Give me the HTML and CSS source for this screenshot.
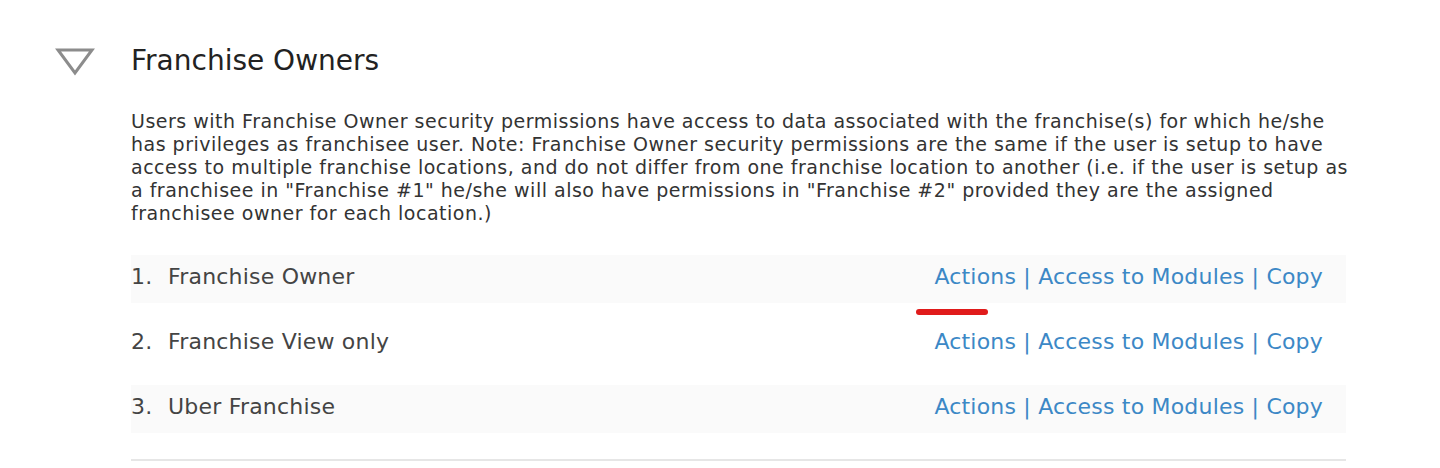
FILE: index.html
```html
<!DOCTYPE html>
<html>
<head>
    <title>Franchise Owners</title>
    <link rel="stylesheet" href="styles.css">
</head>
<body>
    <div class="section">
        <div class="toggle">
            <svg width="40" height="30" viewBox="0 0 40 30">
                <path d="M3 3 H37 L20 26 Z" fill="none" stroke="#8c8c8c" stroke-width="3" stroke-linejoin="miter"/>
            </svg>
        </div>
        <div class="content">
            <h2>Franchise Owners</h2>
            <p class="desc">Users with Franchise Owner security permissions have access to data associated with the franchise(s) for which he/she has privileges as franchisee user. Note: Franchise Owner security permissions are the same if the user is setup to have access to multiple franchise locations, and do not differ from one franchise location to another (i.e. if the user is setup as a franchisee in "Franchise #1" he/she will also have permissions in "Franchise #2" provided they are the assigned franchisee owner for each location.)</p>
            <ol class="roles">
                <li class="role shaded">
                    <span class="num">1.</span>
                    <span class="name">Franchise Owner</span>
                    <span class="links">
                        <a href="#">Actions</a> | <a href="#">Access to Modules</a> | <a href="#">Copy</a>
                        <span class="mark"></span>
                    </span>
                </li>
                <li class="role">
                    <span class="num">2.</span>
                    <span class="name">Franchise View only</span>
                    <span class="links">
                        <a href="#">Actions</a> | <a href="#">Access to Modules</a> | <a href="#">Copy</a>
                    </span>
                </li>
                <li class="role shaded">
                    <span class="num">3.</span>
                    <span class="name">Uber Franchise</span>
                    <span class="links">
                        <a href="#">Actions</a> | <a href="#">Access to Modules</a> | <a href="#">Copy</a>
                    </span>
                </li>
            </ol>
        </div>
    </div>
</body>
</html>
```

FILE: styles.css
```css
body {
    margin: 0;
    background: #fff;
    font-family: "DejaVu Sans", Verdana, sans-serif;
    color: #333;
}
.section {
    display: flex;
    padding: 0 94px 0 55px;
}
.toggle {
    width: 76px;
    padding-top: 47px;
}
.toggle svg {
    display: block;
}
.content {
    flex: 1;
    border-bottom: 2px solid #e6e6e6;
    padding-bottom: 26px;
}
h2 {
    margin: 0;
    padding-top: 43px;
    font-size: 28px;
    font-weight: 400;
    line-height: 36px;
    color: #222;
}
.desc {
    margin: 31px -10px 0 0;
    font-size: 19px;
    line-height: 23px;
    letter-spacing: 0.5px;
    color: #333;
}
.roles {
    list-style: none;
    margin: 30px 0 0;
    padding: 0;
    display: flex;
    flex-direction: column;
    gap: 17px;
}
.role {
    display: flex;
    align-items: center;
    height: 48px;
    padding: 0 23px 6px 0;
    box-sizing: border-box;
    font-size: 22px;
    letter-spacing: 0.2px;
    color: #444;
}
.role.shaded {
    background: #fafafa;
}
.num {
    width: 37px;
}
.name {
    flex: 1;
}
.links {
    position: relative;
    color: #3c88c6;
}
.links a {
    color: #3c88c6;
    text-decoration: none;
}
.mark {
    position: absolute;
    left: -18px;
    top: 45px;
    width: 72px;
    height: 6px;
    border-radius: 3px;
    background: #e01b1b;
}
```
